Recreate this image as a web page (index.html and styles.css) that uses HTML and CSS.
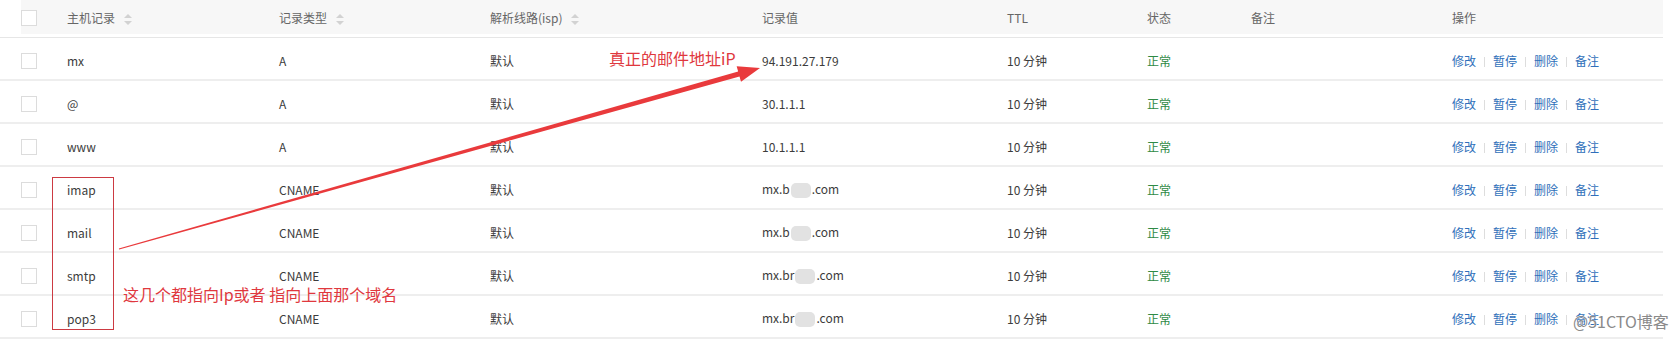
FILE: index.html
```html
<!DOCTYPE html>
<html lang="zh-CN">
<head>
  <meta charset="UTF-8" />
  <title>解析记录</title>
  <link rel="stylesheet" href="styles.css">
</head>
<body>
  <div class="record-panel">
    <table class="record-table">
      <colgroup>
        <col style="width:67px"><col style="width:212px"><col style="width:211px"><col style="width:272px">
        <col style="width:245px"><col style="width:140px"><col style="width:104px"><col style="width:201px"><col style="width:211px">
      </colgroup>
      <thead>
        <tr>
          <th class="check-cell"><span class="checkbox"></span></th>
          <th>主机记录<span class="sort"></span></th>
          <th>记录类型<span class="sort"></span></th>
          <th>解析线路(isp)<span class="sort"></span></th>
          <th>记录值</th>
          <th>TTL</th>
          <th>状态</th>
          <th>备注</th>
          <th>操作</th>
        </tr>
      </thead>
      <tbody id="records"></tbody>
    </table>

    <!-- annotations drawn over the table -->
    <svg class="overlay" width="1679" height="346" viewBox="0 0 1679 346">
      <rect x="52.5" y="177.5" width="61" height="152" fill="none" stroke="#cc3a42" stroke-width="1"/>
      <polygon fill="#e93a3c" points="118.84,248.42 738.15,71.57 736.66,66.28 760,68 741.00,81.68 739.51,76.39 119.16,249.58"/>
    </svg>
    <span class="note note-ip">真正的邮件地址iP</span>
    <span class="note note-cname">这几个都指向Ip或者 指向上面那个域名</span>
    <span class="watermark">@51CTO博客</span>
  </div>

  <script>
    const records = [
      { host: 'mx', type: 'A', value: '94.191.27.179' },
      { host: '@', type: 'A', value: '30.1.1.1' },
      { host: 'www', type: 'A', value: '10.1.1.1' },
      { host: 'imap', type: 'CNAME', value: ['mx.b', '.com'] },
      { host: 'mail', type: 'CNAME', value: ['mx.b', '.com'] },
      { host: 'smtp', type: 'CNAME', value: ['mx.br', '.com'] },
      { host: 'pop3', type: 'CNAME', value: ['mx.br', '.com'] }
    ];

    const tbody = document.getElementById('records');
    records.forEach(r => {
      const value = Array.isArray(r.value)
        ? `${r.value[0]}<span class="blur"></span>${r.value[1]}`
        : r.value;
      const tr = document.createElement('tr');
      tr.innerHTML = `
        <td class="check-cell"><span class="checkbox"></span></td>
        <td>${r.host}</td>
        <td>${r.type}</td>
        <td>默认</td>
        <td>${value}</td>
        <td>10 分钟</td>
        <td class="status">正常</td>
        <td></td>
        <td class="actions">
          <a>修改</a><span class="sep"></span><a>暂停</a><span class="sep"></span><a>删除</a><span class="sep"></span><a>备注</a>
        </td>
      `;
      tbody.appendChild(tr);
    });
  </script>
</body>
</html>
```

FILE: styles.css
```css
* {
  box-sizing: border-box;
}

body {
  margin: 0;
  background: #fff;
  font-family: "Noto Sans CJK SC", "Noto Sans", sans-serif;
  font-size: 12px;
  color: #3c3c3c;
}

.record-panel {
  position: relative;
  width: 1679px;
  height: 346px;
  overflow: hidden;
}

.record-table {
  width: 1663px;
  table-layout: fixed;
  border-collapse: separate;
  border-spacing: 0;
}

.record-table th,
.record-table td {
  padding: 0;
  text-align: left;
  vertical-align: middle;
  white-space: nowrap;
}

.record-table th {
  height: 38px;
  padding-bottom: 3px;
  background: #f7f7f7;
  background-clip: content-box;
  border-bottom: 1px solid #e6e6e6;
  font-weight: normal;
  color: #666;
}

.record-table td {
  height: 43px;
  padding-top: 3px;
  border-bottom: 2px solid #eeeeee;
}

.check-cell {
  padding-left: 21px !important;
}

.checkbox {
  display: inline-block;
  width: 16px;
  height: 16px;
  border: 1px solid #dcdcdc;
  background: #fff;
  vertical-align: middle;
}

.sort {
  display: inline-block;
  position: relative;
  width: 8px;
  height: 11px;
  margin-left: 9px;
  vertical-align: middle;
}

.sort::before,
.sort::after {
  content: "";
  position: absolute;
  left: 0;
  border-left: 4px solid transparent;
  border-right: 4px solid transparent;
}

.sort::before {
  top: 0;
  border-bottom: 4px solid #d2d2d2;
}

.sort::after {
  bottom: 0;
  border-top: 4px solid #d2d2d2;
}

.blur {
  display: inline-block;
  width: 20px;
  height: 15px;
  margin: 0 1px;
  border-radius: 5px;
  background: #e2e2e2;
  vertical-align: middle;
}

.status {
  color: #2f8a45;
}

.actions a {
  color: #2f6fba;
  cursor: pointer;
}

.actions .sep {
  display: inline-block;
  width: 1px;
  height: 10px;
  margin: 0 8px;
  background: #dddddd;
  vertical-align: middle;
}

.overlay {
  position: absolute;
  top: 0;
  left: 0;
  pointer-events: none;
}

.note {
  position: absolute;
  font-size: 16px;
  line-height: 20px;
  color: #e0383e;
  white-space: nowrap;
}

.note-ip {
  left: 609px;
  top: 48px;
}

.note-cname {
  left: 123px;
  top: 284px;
}

.watermark {
  position: absolute;
  left: 1573px;
  top: 311px;
  font-size: 16px;
  line-height: 20px;
  color: #8a8a8a;
  text-shadow: 0 0 1px #fff, 0 0 1px #fff;
  white-space: nowrap;
}
```
